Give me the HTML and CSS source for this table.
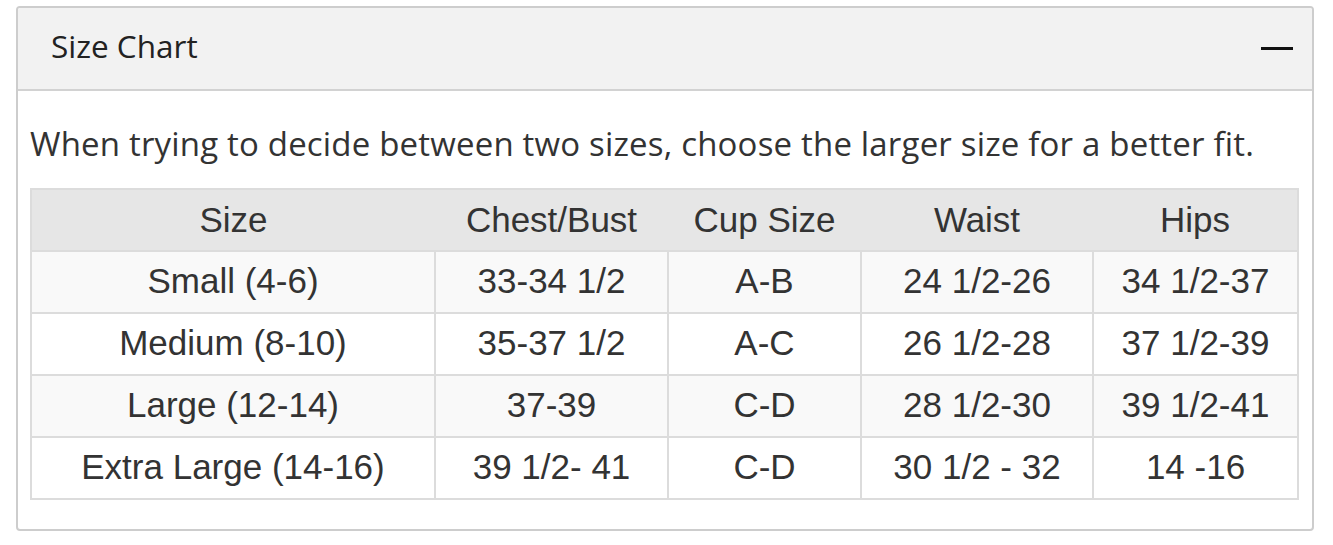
FILE: index.html
```html
<!DOCTYPE html>
<html>
<head>
<meta charset="utf-8">
<link rel="stylesheet" href="styles.css">
</head>
<body>
<div class="panel">
  <div class="panel-head">
    <span class="panel-title">Size Chart</span>
    <span class="minus"></span>
  </div>
  <div class="panel-body">
    <p class="note">When trying to decide between two sizes, choose the larger size for a better fit.</p>
    <table class="chart">
      <colgroup>
        <col class="c1"><col class="c2"><col class="c3"><col class="c4"><col class="c5">
      </colgroup>
      <thead>
        <tr><th>Size</th><th>Chest/Bust</th><th>Cup Size</th><th>Waist</th><th>Hips</th></tr>
      </thead>
      <tbody>
        <tr><td>Small (4-6)</td><td>33-34 1/2</td><td>A-B</td><td>24 1/2-26</td><td>34 1/2-37</td></tr>
        <tr><td>Medium (8-10)</td><td>35-37 1/2</td><td>A-C</td><td>26 1/2-28</td><td>37 1/2-39</td></tr>
        <tr><td>Large (12-14)</td><td>37-39</td><td>C-D</td><td>28 1/2-30</td><td>39 1/2-41</td></tr>
        <tr><td>Extra Large (14-16)</td><td>39 1/2- 41</td><td>C-D</td><td>30 1/2 - 32</td><td>14 -16</td></tr>
      </tbody>
    </table>
  </div>
</div>
</body>
</html>
```
FILE: styles.css
```css
html, body {
  margin: 0;
  padding: 0;
  background: #ffffff;
}
body {
  padding: 6px 0 0 16px;
}
.panel {
  width: 1298px;
  height: 525px;
  box-sizing: border-box;
  border: 2px solid #cdcdcd;
  border-radius: 4px;
  overflow: hidden;
  background: #fff;
}
.panel-head {
  height: 83px;
  box-sizing: border-box;
  background: #f2f2f2;
  border-bottom: 2px solid #d2d2d2;
  display: flex;
  align-items: center;
  justify-content: space-between;
  padding: 0 19px 0 33px;
}
.panel-title {
  font-family: "Open Sans", sans-serif;
  font-size: 31.5px;
  color: #222;
  position: relative;
  top: -3px;
}
.minus {
  width: 32px;
  height: 3px;
  background: #111;
  position: relative;
  top: 0;
}
.panel-body {
  padding: 0 15px 0 12px;
}
.note {
  margin: 0;
  padding-top: 32px;
  height: 66px;
  font-family: "Open Sans", sans-serif;
  font-size: 33px;
  letter-spacing: 0.18px;
  line-height: 42px;
  color: #333;
  box-sizing: border-box;
  white-space: nowrap;
}
.chart {
  margin-top: 31px;
  width: 1267px;
  border-collapse: collapse;
  table-layout: fixed;
  font-family: "Liberation Sans", Arial, sans-serif;
  font-size: 35px;
  color: #333;
  border: 2px solid #dcdcdc;
}
.c1 { width: 404px; }
.c2 { width: 233px; }
.c3 { width: 193px; }
.c4 { width: 232px; }
.c5 { width: 205px; }
.chart th {
  background: #e6e6e6;
  font-weight: normal;
  height: 60px;
  padding: 0;
  text-align: center;
  border-bottom: 2px solid #dcdcdc;
}
.chart td {
  height: 62px;
  padding: 0 0 2px;
  text-align: center;
  border: 2px solid #dcdcdc;
  box-sizing: border-box;
}
.chart tbody tr:nth-child(odd) td {
  background: #f9f9f9;
}
```
